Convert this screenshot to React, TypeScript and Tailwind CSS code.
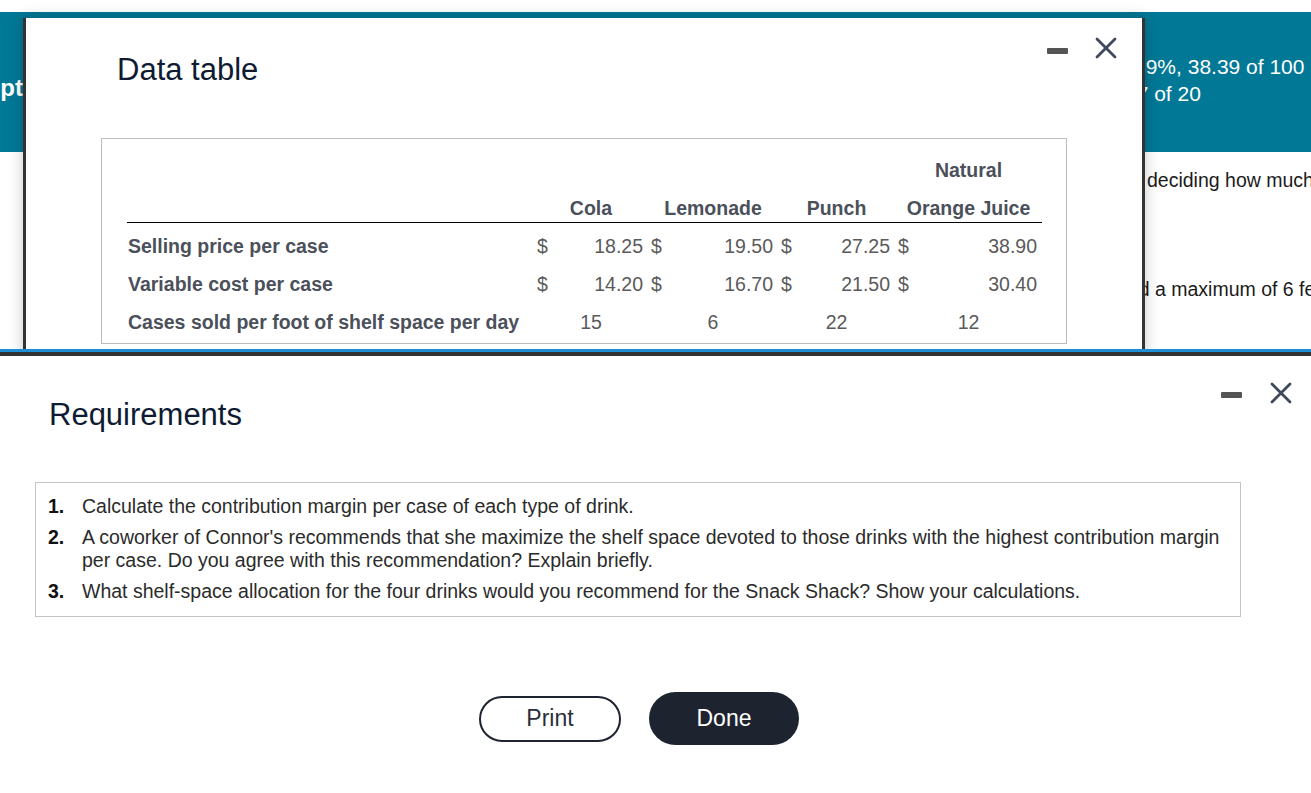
import React from 'react';

// Data-table popup over a homework page, with the Requirements popup stacked on top.

const ROWS = [
  { label: 'Selling price per case', values: ['18.25', '19.50', '27.25', '38.90'] },
  { label: 'Variable cost per case', values: ['14.20', '16.70', '21.50', '30.40'] },
];
const CASES = ['15', '6', '22', '12'];

const REQS = [
  'Calculate the contribution margin per case of each type of drink.',
  "A coworker of Connor's recommends that she maximize the shelf space devoted to those drinks with the highest contribution margin per case. Do you agree with this recommendation? Explain briefly.",
  'What shelf-space allocation for the four drinks would you recommend for the Snack Shack? Show your calculations.',
];

function CloseIcon() {
  return (
    <svg width="22" height="22" viewBox="0 0 22 22" fill="none" stroke="#3e4a5b" strokeWidth="2.8" strokeLinecap="round">
      <path d="M2 2L20 20M20 2L2 20" />
    </svg>
  );
}

function WindowControls() {
  return (
    <div className="flex items-start gap-[27px]">
      <div className="mt-[11px] w-[21px] h-[6px] rounded-[1px] bg-[#555]" />
      <CloseIcon />
    </div>
  );
}

function DataTable() {
  return (
    <div className="ml-[75px] mt-[50px] w-[966px] border border-[#bcbcbc] pl-[25px] pt-[19px] pb-[2px] text-[19.5px]">
      {/* header */}
      <div className="w-[915px] grid grid-cols-[407px_114px_130px_117px_147px] border-b border-black pb-[2px] font-bold text-[#4b505b] leading-[24px]">
        <div />
        <div className="self-end text-center">Cola</div>
        <div className="self-end text-center">Lemonade</div>
        <div className="self-end text-center">Punch</div>
        <div className="text-center">
          <div className="mb-[14px]">Natural</div>
          <div>Orange Juice</div>
        </div>
      </div>

      <div className="w-[915px] pt-[4px] leading-[38px]">
        {ROWS.map((r) => (
          <div key={r.label} className="grid grid-cols-[407px_114px_130px_117px_147px]">
            <div className="pl-[1px] font-bold text-[#4b505b]">{r.label}</div>
            {r.values.map((v, i) => (
              <div key={i} className="flex justify-between pl-[3px] pr-[5px] text-[#5a5a5a]">
                <span>$</span>
                <span>{v}</span>
              </div>
            ))}
          </div>
        ))}
        <div className="grid grid-cols-[407px_114px_130px_117px_147px]">
          <div className="pl-[1px] font-bold text-[#4b505b]">Cases sold per foot of shelf space per day</div>
          {CASES.map((c, i) => (
            <div key={i} className="text-center text-[#5a5a5a]">{c}</div>
          ))}
        </div>
      </div>
    </div>
  );
}

export default function App() {
  return (
    <div className="relative w-[1311px] h-[793px] overflow-hidden bg-white font-['Liberation_Sans',Arial,sans-serif]">
      {/* ── Page behind the popups ── */}
      <div className="pt-[12px]">
        <div className="h-[140px] flex bg-[#007896] text-white">
          <div className="w-[23px] overflow-hidden flex justify-end pt-[62px]">
            <span className="whitespace-nowrap text-[24px] font-bold leading-[28px]">Concept</span>
          </div>
          <div className="flex-1" />
          <div className="w-[186px] pt-[41px] text-[21px] leading-[27px] whitespace-nowrap">
            <div className="pl-[9px]">39%, 38.39 of 100</div>
            <div>17 of 20</div>
          </div>
        </div>
        <div className="flex">
          <div className="flex-1" />
          <div className="w-[194px] pt-[15px] text-[19.5px] leading-[27px] text-[#1b1b1b] whitespace-nowrap">
            <div className="pl-[30px]">deciding how much</div>
            <div className="mt-[82px]">and a maximum of 6 feet</div>
          </div>
        </div>
      </div>

      {/* ── Data table popup ── */}
      <div className="absolute left-[23px] top-[18px] w-[1122px] h-[400px] bg-white border-x-[3px] border-[#333] shadow-[0_0_14px_rgba(0,0,0,0.22)]">
        <div className="flex items-start justify-between pl-[91px] pr-[25px] pt-[19px]">
          <div className="mt-[15px] text-[31px] leading-[36px] text-[#0e1b33]">Data table</div>
          <WindowControls />
        </div>
        <DataTable />
      </div>

      {/* ── Requirements popup ── */}
      <div className="absolute left-0 right-0 top-[349px] bottom-0 bg-white border-t-[3px] border-[#1d8fd6]">
        <div className="h-full border-t-[4px] border-[#333]">
          <div className="flex items-start justify-between pl-[49px] pr-[19px] pt-[26px]">
            <div className="mt-[15px] text-[31px] leading-[36px] text-[#0e1b33]">Requirements</div>
            <div className="flex items-start gap-[28px]">
              <div className="mt-[10px] w-[21px] h-[6px] rounded-[1px] bg-[#555]" />
              <CloseIcon />
            </div>
          </div>

          <div className="ml-[35px] mt-[49px] w-[1206px] border border-[#c4c4c4] pl-[12px] pr-[12px] pt-[12px] pb-[13px] text-[19.5px] leading-[23px] text-[#2b2b2b]">
            {REQS.map((t, i) => (
              <div key={i} className={`flex ${i > 0 ? 'mt-[8px]' : ''}`}>
                <div className="w-[34px] shrink-0 font-bold text-[#111]">{i + 1}.</div>
                <div>{t}</div>
              </div>
            ))}
          </div>

          <div className="flex items-center gap-[28px] pl-[479px] mt-[75px]">
            <button className="w-[142px] h-[46px] rounded-full border-2 border-[#1e2330] text-[23px] text-[#2a2f3a]">
              Print
            </button>
            <button className="w-[150px] h-[53px] rounded-full bg-[#1e2330] text-[23px] text-white">
              Done
            </button>
          </div>
        </div>
      </div>
    </div>
  );
}
